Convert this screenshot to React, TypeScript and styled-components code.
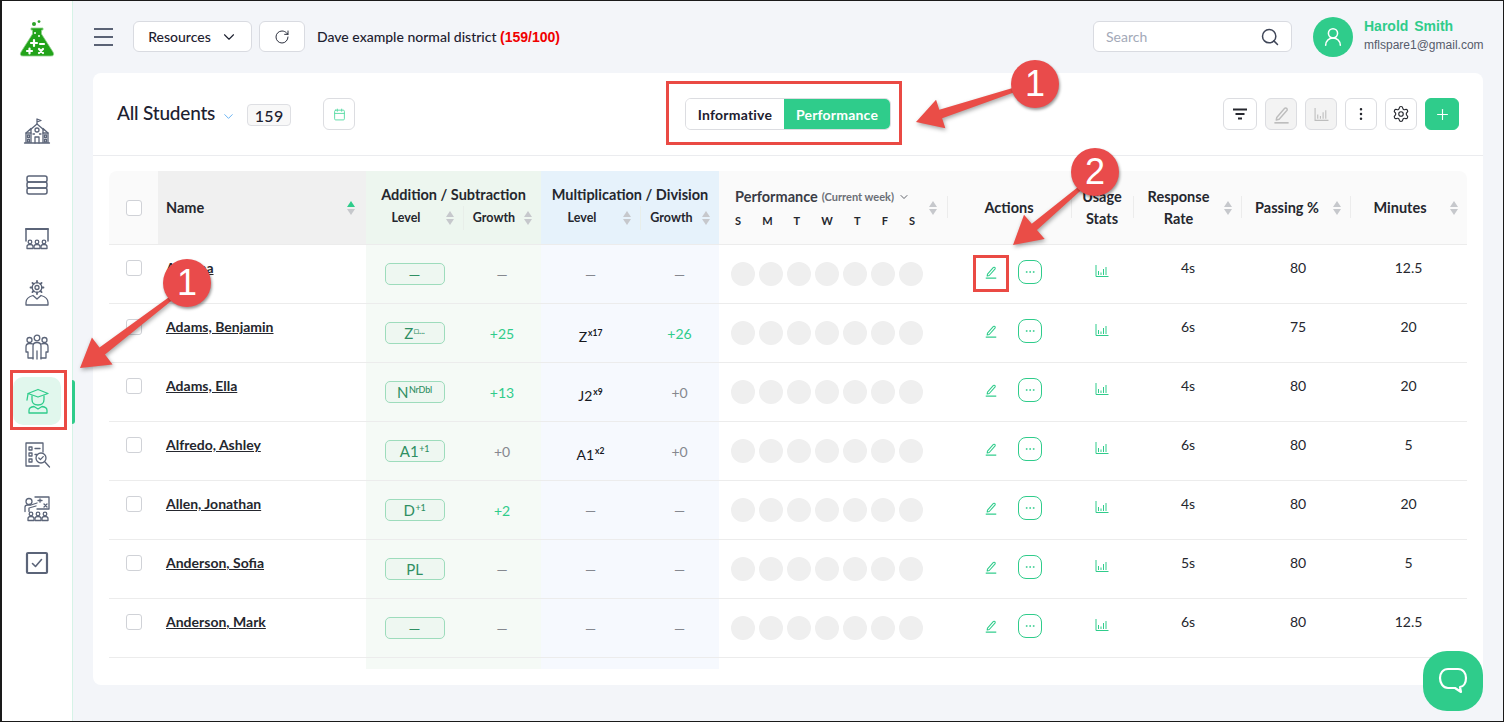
import React from "react";
import styled, { createGlobalStyle, css } from "styled-components";
import {
  ChevronDown,
  MoreHorizontal,
  MoreVertical,
  Plus,
  RotateCw,
  Search,
  Settings,
  UserRound,
  Calendar,
} from "lucide-react";

const GREEN = "#2fcc8b";
const COLS = "49px 208px 97px 78px 99px 79px 228px 124px 62px 108px 109px 117px";

const GlobalStyle = createGlobalStyle`
  html, body { margin: 0; padding: 0; background: #f3f5f9; }
  * { box-sizing: border-box; }
  body { font-family: Lato, "Liberation Sans", sans-serif; color: #1d2130; }
`;

const Frame = styled.div`
  position: relative;
  display: flex;
  width: 1504px;
  height: 722px;
  overflow: hidden;
  background: #f3f5f9;
  &::after {
    content: "";
    position: absolute;
    inset: 0;
    border: 1px solid #1a1a1a;
    border-left-width: 2px;
    pointer-events: none;
  }
`;

const Sidebar = styled.aside`
  width: 73px;
  flex-shrink: 0;
  padding: 20px 0 0 1px;
  background: #fff;
  border-right: 1px solid #d6f3e7;
  display: flex;
  flex-direction: column;
  align-items: center;
`;

const Nav = styled.nav`
  margin-top: 50px;
  display: flex;
  flex-direction: column;
  gap: 6px;
`;

const NavItem = styled.div<{ $active?: boolean }>`
  position: relative;
  width: 48px;
  height: 48px;
  display: flex;
  align-items: center;
  justify-content: center;
  border-radius: 10px;
  color: #5b6478;
  ${(p) =>
    p.$active &&
    css`
      background: #e1f7ed;
      color: ${GREEN};
      &::after {
        content: "";
        position: absolute;
        left: 59px;
        top: 3px;
        width: 3px;
        height: 44px;
        background: ${GREEN};
        border-radius: 0 4px 4px 0;
      }
    `}
`;

const Main = styled.main`
  flex: 1;
  min-width: 0;
  padding-left: 20px;
  padding-right: 21px;
`;

const Header = styled.header`
  height: 73px;
  display: flex;
  align-items: center;
`;

const MenuButton = styled.div`
  width: 19px;
  margin-left: 1px;
  margin-right: 20px;
  display: flex;
  flex-direction: column;
  gap: 6px;
  span {
    height: 2px;
    background: #5a6275;
  }
`;

const HeaderButton = styled.button`
  height: 31px;
  display: flex;
  align-items: center;
  justify-content: center;
  gap: 9px;
  background: #fff;
  border: 1px solid #d9dbe1;
  border-radius: 6px;
  font: 500 14px Lato, sans-serif;
  color: #1d2130;
  padding: 0;
`;

const ResourcesButton = styled(HeaderButton)`
  width: 119px;
  padding-left: 1px;
`;

const RefreshButton = styled(HeaderButton)`
  width: 46px;
  margin-left: 7px;
`;

const District = styled.div`
  margin-left: 12px;
  font-size: 14px;
  font-weight: 500;
  color: #1d2130;
  b {
    font: bold 14px "Liberation Sans", sans-serif;
    color: #f00000;
  }
`;

const SearchBox = styled.div`
  margin-left: auto;
  width: 199px;
  height: 31px;
  display: flex;
  align-items: center;
  justify-content: space-between;
  padding: 0 11px 0 12px;
  background: #fff;
  border: 1px solid #d9dbe1;
  border-radius: 6px;
  color: #3f4658;
`;

const SearchInput = styled.input`
  border: 0;
  outline: 0;
  width: 120px;
  padding: 0;
  font: 14px Lato, sans-serif;
  &::placeholder {
    color: #a3a9b8;
  }
`;

const Avatar = styled.div`
  width: 40px;
  height: 40px;
  margin-left: 21px;
  border-radius: 50%;
  background: ${GREEN};
  color: #fff;
  display: flex;
  align-items: center;
  justify-content: center;
`;

const UserInfo = styled.div`
  margin-left: 11px;
  margin-right: -11px;
  width: 130px;
  font-family: "Liberation Sans", Arial, sans-serif;
`;

const UserName = styled.div`
  font-size: 14px;
  font-weight: 700;
  color: ${GREEN};
  word-spacing: 2px;
  line-height: 17px;
`;

const UserMail = styled.div`
  font-size: 12px;
  color: #565c6b;
  line-height: 20px;
`;

const Card = styled.section`
  height: 612px;
  background: #fff;
  border-radius: 8px;
`;

const Toolbar = styled.div`
  height: 83px;
  display: grid;
  grid-template-columns: 1fr auto 1fr;
  align-items: center;
  padding: 0 24px;
  border-bottom: 1px solid #ebecef;
`;

const ToolbarLeft = styled.div`
  display: flex;
  align-items: center;
`;

const Title = styled.h1`
  margin: 0 0 3px;
  font-size: 19px;
  font-weight: 500;
  letter-spacing: -0.2px;
  color: #1d2130;
`;

const TitleChevron = styled.span`
  display: flex;
  margin: 4px 0 0 6px;
  color: #4aa3f0;
`;

const CountBadge = styled.div`
  margin-left: 11px;
  width: 44px;
  height: 22px;
  display: flex;
  align-items: center;
  justify-content: center;
  background: #f8f8f8;
  border: 1px solid #dedfe3;
  border-radius: 4px;
  font-size: 16px;
  font-weight: 500;
  letter-spacing: 0.4px;
  margin-top: 2px;
`;

const IconButton = styled.button<{ $disabled?: boolean; $primary?: boolean; $wide?: boolean }>`
  width: ${(p) => (p.$wide ? 34 : 32)}px;
  height: 32px;
  padding: 0;
  display: flex;
  align-items: center;
  justify-content: center;
  border-radius: 6px;
  border: 1px solid ${(p) => (p.$primary ? GREEN : "#dcdde1")};
  background: ${(p) => (p.$primary ? GREEN : p.$disabled ? "#f3f3f3" : "#fff")};
  color: ${(p) => (p.$primary ? "#fff" : p.$disabled ? "#bdbdbd" : "#26282f")};
`;

const CalendarButton = styled(IconButton)`
  margin-left: 32px;
  color: #5fdca8;
`;

const Toggle = styled.div`
  width: 206px;
  height: 32px;
  display: flex;
  border: 1px solid #dcdde1;
  border-radius: 6px;
  overflow: hidden;
`;

const ToggleOption = styled.div<{ $on?: boolean }>`
  flex: ${(p) => (p.$on ? "0 0 106px" : 1)};
  display: flex;
  align-items: center;
  justify-content: center;
  font-size: 14px;
  font-weight: 700;
  letter-spacing: 0.2px;
  color: ${(p) => (p.$on ? "#fff" : "#1d2130")};
  background: ${(p) => (p.$on ? GREEN : "#fff")};
`;

const ToolbarRight = styled.div`
  display: flex;
  justify-content: flex-end;
  gap: 8px;
`;

const Table = styled.div`
  margin: 15px 16px 0;
`;

const HeadRow = styled.div`
  display: grid;
  grid-template-columns: ${COLS};
  height: 74px;
  background: #fafafa;
  border-radius: 8px 8px 0 0;
  border-bottom: 1px solid #ececec;
  overflow: hidden;
  font-size: 14.5px;
  font-weight: 700;
  color: #25272e;
`;

const HeadCell = styled.div<{ $bg?: string; $divider?: boolean; $flush?: boolean }>`
  position: relative;
  display: flex;
  align-items: center;
  padding-right: ${(p) => (p.$flush ? 0 : 9)}px;
  background: ${(p) => p.$bg || "transparent"};
  ${(p) =>
    p.$divider &&
    css`
      &::before {
        content: "";
        position: absolute;
        left: 0;
        top: 25px;
        height: 22px;
        width: 1px;
        background: #ececec;
      }
    `}
`;

const CheckHead = styled(HeadCell)`
  justify-content: center;
  padding: 0;
`;

const NameHead = styled(HeadCell)`
  padding: 0 11px 0 8px;
  justify-content: space-between;
`;

const HeadLabel = styled.div`
  flex: 1;
  text-align: center;
  line-height: 22px;
`;

const Group = styled.div<{ $bg: string; $cols: string }>`
  grid-column: span 2;
  display: grid;
  grid-template-columns: ${(p) => p.$cols};
  grid-template-rows: 33px 1fr;
  background: ${(p) => p.$bg};
`;

const GroupTitle = styled.div`
  grid-column: span 2;
  align-self: end;
  text-align: center;
  line-height: 18px;
  white-space: nowrap;
`;

const SubHead = styled.div<{ $divider?: boolean }>`
  display: flex;
  align-items: center;
  height: 24px;
  margin-top: 2px;
  padding-right: 9px;
  font-size: 12.5px;
  ${(p) => p.$divider && "border-left: 1px solid #e8eee9;"}
`;

const PerfHead = styled(HeadCell)`
  padding: 0 10px 0 16px;
  gap: 10px;
`;

const PerfBlock = styled.div`
  flex: 1;
`;

const PerfTitle = styled.div`
  display: flex;
  align-items: center;
  white-space: nowrap;
  margin-bottom: 8px;
  line-height: 18px;
  color: #3a3d46;
  small {
    font-size: 11px;
    color: #6b6e76;
    margin: 1px 4px 0 4px;
  }
`;

const DayRow = styled.div`
  display: flex;
  justify-content: space-between;
  padding: 0 4px 0 0;
  font-size: 11px;
  line-height: 14px;
`;

const Row = styled.div`
  display: grid;
  grid-template-columns: ${COLS};
  height: 59px;
  border-bottom: 1px solid #ececec;
  font-size: 14px;
`;

const TailRow = styled.div`
  display: grid;
  grid-template-columns: ${COLS};
  height: 11px;
`;

const Cell = styled.div<{ $tint?: string; $shift?: number }>`
  display: flex;
  align-items: center;
  justify-content: center;
  background: ${(p) => p.$tint || "transparent"};
  padding-bottom: ${(p) => (p.$shift && p.$shift > 0 ? p.$shift : 0)}px;
  padding-top: ${(p) => (p.$shift && p.$shift < 0 ? -p.$shift : 0)}px;
`;

const NameCell = styled(Cell)`
  justify-content: flex-start;
  padding-left: 8px;
`;

const StudentLink = styled.a`
  font-size: 14px;
  font-weight: 700;
  color: #25272e;
  text-decoration: underline;
`;

const CheckBox = styled.input.attrs({ type: "checkbox" })`
  appearance: none;
  width: 16px;
  height: 16px;
  margin: 0;
  background: #fff;
  border: 1px solid #d0d2d7;
  border-radius: 3px;
`;

const LevelPill = styled.div`
  width: 60px;
  height: 22px;
  display: flex;
  align-items: center;
  justify-content: center;
  background: #eef7f1;
  border: 1px solid #9ddcbc;
  border-radius: 5px;
  font-size: 15px;
  color: #2f8f63;
  sup {
    font-size: 9px;
    font-weight: 500;
    line-height: 1;
    letter-spacing: -0.2px;
    margin-top: -6px;
    margin-left: 0.5px;
  }
`;

const Growth = styled.span<{ $up?: boolean }>`
  color: ${(p) => (p.$up ? GREEN : "#85888f")};
  font-size: 14px;
`;

const MultLevel = styled.span`
  color: #17191f;
  font-size: 14px;
  sup {
    font-size: 8.5px;
    font-weight: 700;
    line-height: 1;
    margin-left: 1px;
  }
`;

const Dots = styled.div`
  display: flex;
  gap: 4px;
  padding-left: 12px;
  width: 100%;
`;

const Dot = styled.div`
  width: 24px;
  height: 24px;
  border-radius: 50%;
  background: #efefef;
`;

const Actions = styled.div`
  display: flex;
  align-items: center;
  gap: 20px;
  margin-left: 7px;
  color: ${GREEN};
`;

const MoreButton = styled.div`
  width: 24px;
  height: 24px;
  display: flex;
  align-items: center;
  justify-content: center;
  border: 1px solid ${GREEN};
  border-radius: 8px;
  color: ${GREEN};
`;

const Value = styled.span<{ $x?: number }>`
  color: #25272e;
  font-size: 14px;
  margin-left: ${(p) => p.$x || 0}px;
`;

const ChatBubble = styled.div`
  position: absolute;
  left: 1423px;
  top: 651px;
  width: 60px;
  height: 60px;
  border-radius: 24px;
  background: ${GREEN};
  color: #fff;
  display: flex;
  align-items: center;
  justify-content: center;
`;

const ArrowLayer = styled.svg`
  position: absolute;
  left: 0;
  top: 0;
  pointer-events: none;
  filter: drop-shadow(1px 2px 2px rgba(0, 0, 0, 0.35));
`;

const RedBox = styled.div<{ $x: number; $y: number; $w: number; $h: number }>`
  position: absolute;
  left: ${(p) => p.$x}px;
  top: ${(p) => p.$y}px;
  width: ${(p) => p.$w}px;
  height: ${(p) => p.$h}px;
  border: 3px solid #ea4a44;
  pointer-events: none;
`;

const Badge = styled.div<{ $x: number; $y: number }>`
  position: absolute;
  left: ${(p) => p.$x - 24}px;
  top: ${(p) => p.$y - 24}px;
  width: 48px;
  height: 48px;
  border-radius: 50%;
  background: #e94b4b;
  box-shadow: 1px 2px 3px rgba(0, 0, 0, 0.4);
  color: #fff;
  display: flex;
  align-items: center;
  justify-content: center;
  font: 36px "Liberation Sans", sans-serif;
`;

const SortIcon = ({ up }: { up?: boolean }) => (
  <svg width="8" height="16" viewBox="0 0 8 16" style={{ flexShrink: 0 }}>
    <path d="M4 1 L8 7 H0 Z" fill={up ? GREEN : "#c6c8cc"} />
    <path d="M4 15 L8 9 H0 Z" fill="#c6c8cc" />
  </svg>
);

const PenIcon = ({ size = 14 }: { size?: number }) => (
  <svg width={size} height={size} viewBox="0 0 16 16" fill="none" stroke="currentColor" strokeWidth="1.2" strokeLinejoin="round">
    <path d="M4 10.5 L10.5 3 a1.3 1.3 0 0 1 2 1.7 L6 12 L3.6 12.6 Z" />
    <path d="M2 15 H14" strokeWidth="1.4" />
  </svg>
);

const BarsIcon = ({ size = 14 }: { size?: number }) => (
  <svg width={size} height={size} viewBox="0 0 14 14" fill="none" stroke="currentColor" strokeWidth="1">
    <path d="M1 1 V12.5 H13.5" />
    <path d="M3.5 11 V7 M6 11 V8.5 M8.5 11 V5 M11 11 V3" />
  </svg>
);

const FilterIcon = () => (
  <svg width="16" height="12" viewBox="0 0 16 12" fill="none" stroke="#26282f" strokeWidth="2">
    <path d="M1 1.5 H15 M3.5 6 H12.5 M6 10.5 H10" />
  </svg>
);

const ChatIcon = () => (
  <svg width="30" height="28" viewBox="0 0 30 28" fill="none" stroke="#fff" strokeWidth="2.2" strokeLinejoin="round">
    <path d="M10 2 H20 C25 2 28 6 28 11 C28 16 25.5 19.5 22 20 L23 25 L17 21 H10 C5 21 2 16 2 11 C2 6 5 2 10 2 Z" />
  </svg>
);

const LogoIcon = () => (
  <svg width="36" height="37" viewBox="0 0 36 37">
    <circle cx="15" cy="4" r="2" fill="#2da329" />
    <circle cx="20" cy="1.6" r="1.4" fill="#2da329" />
    <path d="M12 8 H24 V10 H22.5 V14 L34 32 Q36 36 32 36 H4 Q0 36 2 32 L13.5 14 V10 H12 Z" fill="#22a31a" stroke="#8fd08a" strokeWidth="0.8" />
    <g stroke="#fff" strokeWidth="2.2" strokeLinecap="round">
      <path d="M12 23 H18 M15 20 V26" />
      <path d="M21 24 H25" />
      <path d="M8 31 H13 M10.5 28.5 V33.5" />
      <path d="M20 29 L24 33 M24 29 L20 33" />
    </g>
    <circle cx="16" cy="13" r="1" fill="#fff" />
    <circle cx="20" cy="16" r="1" fill="#fff" />
  </svg>
);

const Ico = ({ children }: { children: React.ReactNode }) => (
  <svg width="28" height="28" viewBox="0 0 28 28" fill="none" stroke="currentColor" strokeWidth="1.3" strokeLinejoin="round" strokeLinecap="round">
    {children}
  </svg>
);

const SchoolIcon = () => (
  <Ico>
    <path d="M14 7 V2 L18 3.5 L14 5" />
    <path d="M7 13 L14 7 L21 13" />
    <path d="M1.5 26 H26.5 M3 26 V16 L8 11.5 M25 26 V16 L20 11.5 M8 26 V12 M20 26 V12" />
    <path d="M3 16 H8 M20 16 H25" />
    <circle cx="14" cy="13" r="2" />
    <path d="M12 26 V20 H16 V26" />
    <path d="M4.5 18 H6.5 V20.5 H4.5 Z M4.5 22.5 H6.5 V25 H4.5 Z M21.5 18 H23.5 V20.5 H21.5 Z M21.5 22.5 H23.5 V25 H21.5 Z M10 17 H11.5 M16.5 17 H18" />
  </Ico>
);

const StackIcon = () => (
  <Ico>
    <rect x="4" y="5" width="20" height="6" rx="2" strokeWidth="1.5" />
    <rect x="4" y="11" width="20" height="6" rx="2" strokeWidth="1.5" />
    <rect x="4" y="17" width="20" height="6" rx="2" strokeWidth="1.5" />
  </Ico>
);

const MiniPerson = ({ x, y }: { x: number; y: number }) => (
  <g>
    <circle cx={x} cy={y} r="1.8" />
    <path d={`M${x - 3} ${y + 6.5} V${y + 4.5} Q${x - 3} ${y + 2.5} ${x} ${y + 2.5} Q${x + 3} ${y + 2.5} ${x + 3} ${y + 4.5} V${y + 6.5} Z`} />
  </g>
);

const ClassroomIcon = () => (
  <Ico>
    <path d="M3 16 V4 H25 V16" strokeWidth="1.5" />
    <path d="M3 4 H25" strokeWidth="1.8" />
    <MiniPerson x={7} y={17} />
    <MiniPerson x={14} y={17} />
    <MiniPerson x={21} y={17} />
  </Ico>
);

const GearPersonIcon = () => (
  <Ico>
    <circle cx="14" cy="8.5" r="4.8" />
    <circle cx="14" cy="8.5" r="2" />
    <path d="M14 2 V3.5 M14 13.5 V15 M7.5 8.5 H9 M19 8.5 H20.5 M9.4 3.9 L10.5 5 M17.5 12 L18.6 13.1 M18.6 3.9 L17.5 5 M10.5 12 L9.4 13.1" strokeWidth="1.8" />
    <path d="M3 26 V23.5 Q3 18.5 10 16.5 L14 20 L18 16.5 Q25 18.5 25 23.5 V26 Z" />
  </Ico>
);

const GroupIcon = () => (
  <Ico>
    <circle cx="14" cy="5" r="2.8" />
    <circle cx="6.5" cy="7" r="2.5" />
    <circle cx="21.5" cy="7" r="2.5" />
    <path d="M10 26 V13 Q10 9.5 14 9.5 Q18 9.5 18 13 V26 M14 18 V26" />
    <path d="M10 11 Q8.5 10.5 6.5 10.5 Q3 10.5 3 14 V19 H5 V25 H10 M18 11 Q19.5 10.5 21.5 10.5 Q25 10.5 25 14 V19 H23 V25 H18" />
  </Ico>
);

const GraduateIcon = () => (
  <Ico>
    <path d="M15 2.5 L25 6.5 L15 10 L5 6.5 Z" />
    <path d="M5 7 L4 13" />
    <path d="M9 9 V12.5 Q9 18 15 18 Q21 18 21 12.5 V9" />
    <path d="M6 26 V23.5 Q6 20 11 19.5 L15 22 L19 19.5 Q24 20 24 23.5 V26 Z" />
  </Ico>
);

const ChecklistIcon = () => (
  <Ico>
    <path d="M16 25 H3 V2 H20 V11" />
    <path d="M6 6 H9 V9 H6 Z M6 12 H9 V15 H6 Z M6 18 H9 V21 H6 Z M12 7.5 H17 M12 13.5 H14" />
    <circle cx="18" cy="17" r="5" />
    <path d="M15.8 17 L17.4 18.6 L20.2 15.6 M22 21 L26.5 26" />
  </Ico>
);

const TeacherIcon = () => (
  <Ico>
    <circle cx="6" cy="6.5" r="3" />
    <path d="M2 16.5 V12 Q2 10 5 10 H8 L14 8 M6 16.5 V13 L13 11" />
    <path d="M12 2 H26 V14 H14" />
    <path d="M15 5.5 H19 M17 3.8 V7.2 M21 9 L24 12 M24 9 L21 12" />
    <MiniPerson x={8} y={19} />
    <MiniPerson x={15} y={19} />
    <MiniPerson x={22} y={19} />
  </Ico>
);

const TaskIcon = () => (
  <Ico>
    <rect x="4" y="4" width="20" height="20" rx="1" strokeWidth="2.2" />
    <path d="M9.5 14.5 L12.5 17.5 L18.5 10.5" strokeWidth="1.6" />
  </Ico>
);

const arrowPoints = (x1: number, y1: number, x2: number, y2: number, tail: number, neck: number, len: number, head: number) => {
  const d = Math.hypot(x2 - x1, y2 - y1);
  const ux = (x2 - x1) / d;
  const uy = (y2 - y1) / d;
  const nx = -uy;
  const ny = ux;
  const bx = x2 - ux * len;
  const by = y2 - uy * len;
  const pts = [
    [x1 + (nx * tail) / 2, y1 + (ny * tail) / 2],
    [bx + (nx * neck) / 2, by + (ny * neck) / 2],
    [bx + (nx * head) / 2, by + (ny * head) / 2],
    [x2, y2],
    [bx - (nx * head) / 2, by - (ny * head) / 2],
    [bx - (nx * neck) / 2, by - (ny * neck) / 2],
    [x1 - (nx * tail) / 2, y1 - (ny * tail) / 2],
  ];
  return pts.map((p) => p.join(",")).join(" ");
};

interface Student {
  name: string;
  addLevel: string;
  addSup?: string;
  addGrowth: string;
  multLevel: string;
  multSup?: string;
  multGrowth: string;
  response: string;
  passing: string;
  minutes: string;
}

const students: Student[] = [
  { name: "Adanna", addLevel: "—", addGrowth: "—", multLevel: "—", multGrowth: "—", response: "4s", passing: "80", minutes: "12.5" },
  { name: "Adams, Benjamin", addLevel: "Z", addSup: "□...", addGrowth: "+25", multLevel: "Z", multSup: "x17", multGrowth: "+26", response: "6s", passing: "75", minutes: "20" },
  { name: "Adams, Ella", addLevel: "N", addSup: "NrDbl", addGrowth: "+13", multLevel: "J2", multSup: "x9", multGrowth: "+0", response: "4s", passing: "80", minutes: "20" },
  { name: "Alfredo, Ashley", addLevel: "A1", addSup: "+1", addGrowth: "+0", multLevel: "A1", multSup: "x2", multGrowth: "+0", response: "6s", passing: "80", minutes: "5" },
  { name: "Allen, Jonathan", addLevel: "D", addSup: "+1", addGrowth: "+2", multLevel: "—", multGrowth: "—", response: "4s", passing: "80", minutes: "20" },
  { name: "Anderson, Sofia", addLevel: "PL", addGrowth: "—", multLevel: "—", multGrowth: "—", response: "5s", passing: "80", minutes: "5" },
  { name: "Anderson, Mark", addLevel: "—", addGrowth: "—", multLevel: "—", multGrowth: "—", response: "6s", passing: "80", minutes: "12.5" },
];

const ADD_TINT = "#f5faf6";
const MULT_TINT = "#f6f9fe";
const NAV = [SchoolIcon, StackIcon, ClassroomIcon, GearPersonIcon, GroupIcon, GraduateIcon, ChecklistIcon, TeacherIcon, TaskIcon];
const DAYS = ["S", "M", "T", "W", "T", "F", "S"];

const StudentRow = ({ s }: { s: Student }) => (
  <Row>
    <Cell $shift={13}>
      <CheckBox />
    </Cell>
    <NameCell $shift={13}>
      <StudentLink>{s.name}</StudentLink>
    </NameCell>
    <Cell $tint={ADD_TINT}>
      <LevelPill>
        {s.addLevel}
        {s.addSup && <sup>{s.addSup}</sup>}
      </LevelPill>
    </Cell>
    <Cell $tint={ADD_TINT}>
      <Growth $up={s.addGrowth.startsWith("+") && s.addGrowth !== "+0"}>{s.addGrowth}</Growth>
    </Cell>
    <Cell $tint={MULT_TINT} $shift={s.multLevel === "—" ? 0 : -6}>
      {s.multLevel === "—" ? (
        <Growth>—</Growth>
      ) : (
        <MultLevel>
          {s.multLevel}
          <sup>{s.multSup}</sup>
        </MultLevel>
      )}
    </Cell>
    <Cell $tint={MULT_TINT}>
      <Growth $up={s.multGrowth.startsWith("+") && s.multGrowth !== "+0"}>{s.multGrowth}</Growth>
    </Cell>
    <Cell $shift={1}>
      <Dots>
        {DAYS.map((_, i) => (
          <Dot key={i} />
        ))}
      </Dots>
    </Cell>
    <Cell $shift={4}>
      <Actions>
        <PenIcon />
        <MoreButton>
          <MoreHorizontal size={12} strokeWidth={1.6} />
        </MoreButton>
      </Actions>
    </Cell>
    <Cell $shift={4}>
      <Growth $up>
        <BarsIcon />
      </Growth>
    </Cell>
    <Cell $shift={13}>
      <Value $x={2}>{s.response}</Value>
    </Cell>
    <Cell $shift={13}>
      <Value $x={5}>{s.passing}</Value>
    </Cell>
    <Cell $shift={13}>
      <Value>{s.minutes}</Value>
    </Cell>
  </Row>
);

const App: React.FC = () => (
  <Frame>
    <GlobalStyle />
    <Sidebar>
      <LogoIcon />
      <Nav>
        {NAV.map((Icon, i) => (
          <NavItem key={i} $active={i === 5}>
            <Icon />
          </NavItem>
        ))}
      </Nav>
    </Sidebar>
    <Main>
      <Header>
        <MenuButton>
          <span />
          <span />
          <span />
        </MenuButton>
        <ResourcesButton>
          Resources <ChevronDown size={18} strokeWidth={1.5} />
        </ResourcesButton>
        <RefreshButton>
          <RotateCw size={16} strokeWidth={1.4} />
        </RefreshButton>
        <District>
          Dave example normal district <b>(159/100)</b>
        </District>
        <SearchBox>
          <SearchInput placeholder="Search" />
          <Search size={20} strokeWidth={1.8} />
        </SearchBox>
        <Avatar>
          <UserRound size={22} strokeWidth={1.7} />
        </Avatar>
        <UserInfo>
          <UserName>Harold Smith</UserName>
          <UserMail>mflspare1@gmail.com</UserMail>
        </UserInfo>
      </Header>
      <Card>
        <Toolbar>
          <ToolbarLeft>
            <Title>All Students</Title>
            <TitleChevron>
              <ChevronDown size={15} strokeWidth={1.3} />
            </TitleChevron>
            <CountBadge>159</CountBadge>
            <CalendarButton>
              <Calendar size={13} strokeWidth={1.8} />
            </CalendarButton>
          </ToolbarLeft>
          <Toggle>
            <ToggleOption>Informative</ToggleOption>
            <ToggleOption $on>Performance</ToggleOption>
          </Toggle>
          <ToolbarRight>
            <IconButton $wide>
              <FilterIcon />
            </IconButton>
            <IconButton $disabled>
              <PenIcon size={19} />
            </IconButton>
            <IconButton $disabled>
              <BarsIcon size={15} />
            </IconButton>
            <IconButton>
              <MoreVertical size={16} strokeWidth={1.8} />
            </IconButton>
            <IconButton>
              <Settings size={18} strokeWidth={1.5} />
            </IconButton>
            <IconButton $primary $wide>
              <Plus size={17} strokeWidth={1.6} />
            </IconButton>
          </ToolbarRight>
        </Toolbar>
        <Table>
          <HeadRow>
            <CheckHead>
              <CheckBox />
            </CheckHead>
            <NameHead $bg="#f0f0f0">
              Name
              <SortIcon up />
            </NameHead>
            <Group $bg="#edf6ef" $cols="97px 78px">
              <GroupTitle>Addition / Subtraction</GroupTitle>
              <SubHead>
                <HeadLabel>Level</HeadLabel>
                <SortIcon />
              </SubHead>
              <SubHead $divider>
                <HeadLabel>Growth</HeadLabel>
                <SortIcon />
              </SubHead>
            </Group>
            <Group $bg="#e6f2fb" $cols="99px 79px">
              <GroupTitle>Multiplication / Division</GroupTitle>
              <SubHead>
                <HeadLabel>Level</HeadLabel>
                <SortIcon />
              </SubHead>
              <SubHead $divider>
                <HeadLabel>Growth</HeadLabel>
                <SortIcon />
              </SubHead>
            </Group>
            <PerfHead>
              <PerfBlock>
                <PerfTitle>
                  Performance
                  <small>(Current week)</small>
                  <ChevronDown size={12} strokeWidth={1.6} />
                </PerfTitle>
                <DayRow>
                  {DAYS.map((d, i) => (
                    <span key={i}>{d}</span>
                  ))}
                </DayRow>
              </PerfBlock>
              <SortIcon />
            </PerfHead>
            <HeadCell $divider $flush>
              <HeadLabel>Actions</HeadLabel>
            </HeadCell>
            <HeadCell $divider $flush>
              <HeadLabel>
                Usage
                <br />
                Stats
              </HeadLabel>
            </HeadCell>
            <HeadCell $divider>
              <HeadLabel>
                Response
                <br />
                Rate
              </HeadLabel>
              <SortIcon />
            </HeadCell>
            <HeadCell $divider>
              <HeadLabel>Passing %</HeadLabel>
              <SortIcon />
            </HeadCell>
            <HeadCell $divider>
              <HeadLabel>Minutes</HeadLabel>
              <SortIcon />
            </HeadCell>
          </HeadRow>
          {students.map((s) => (
            <StudentRow key={s.name} s={s} />
          ))}
          <TailRow>
            <div />
            <div />
            <Cell $tint={ADD_TINT} />
            <Cell $tint={ADD_TINT} />
            <Cell $tint={MULT_TINT} />
            <Cell $tint={MULT_TINT} />
          </TailRow>
        </Table>
      </Card>
    </Main>
    <ChatBubble>
      <ChatIcon />
    </ChatBubble>
    <RedBox $x={666} $y={81} $w={236} $h={64} />
    <RedBox $x={10} $y={370} $w={57} $h={60} />
    <RedBox $x={973} $y={255} $w={36} $h={37} />
    <ArrowLayer width="1504" height="722">
      <polygon points={arrowPoints(1020, 88, 916, 122, 4, 9, 26, 30)} fill="#ea4d47" />
      <polygon points={arrowPoints(178, 293, 80, 368, 4, 9, 28, 34)} fill="#ea4d47" />
      <polygon points={arrowPoints(1085, 184, 1013, 245, 4, 8, 28, 32)} fill="#ea4d47" />
    </ArrowLayer>
    <Badge $x={1035} $y={84}>1</Badge>
    <Badge $x={1095} $y={172}>2</Badge>
    <Badge $x={187} $y={283}>1</Badge>
  </Frame>
);

export default App;
